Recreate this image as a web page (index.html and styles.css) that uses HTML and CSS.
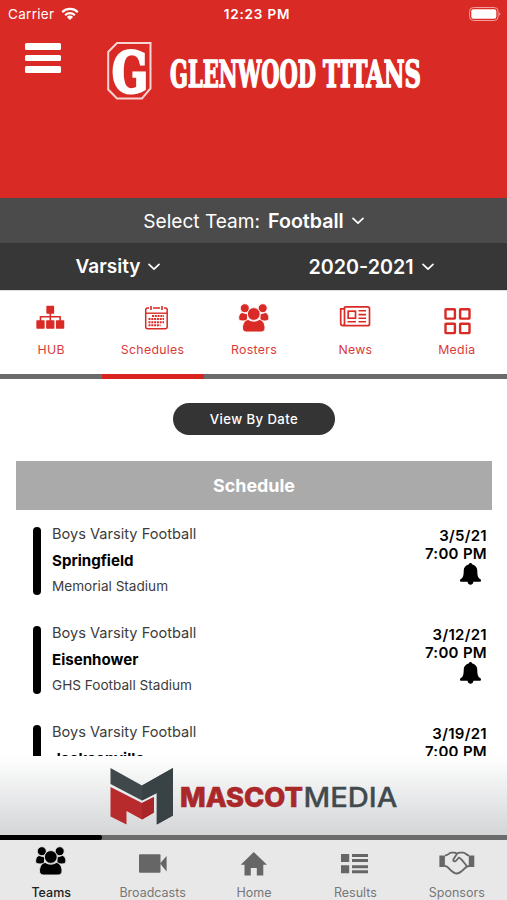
FILE: index.html
```
<!DOCTYPE html>
<html lang="en">
<head>
  <meta charset="UTF-8">
  <meta name="viewport" content="width=device-width, initial-scale=1.0">
  <title>Glenwood Titans - Schedules</title>
  <link rel="stylesheet" href="styles.css">
</head>
<body>
  <!-- Shared icons -->
  <svg class="defs" width="0" height="0">
    <symbol id="people" viewBox="0 0 36 34">
      <circle cx="8.800" cy="6.200" r="4.500"/>
      <circle cx="26.700" cy="6.200" r="4.500"/>
      <path d="M6 10.500c-3 1-4 5-3 7.500 2 1.300 6 1.300 8.500 0v-6zM29.500 10.500c3 1 4 5 3 7.500-2 1.300-6 1.300-8.500 0v-6z"/>
      <path d="M12.200 17.500q5.600 3.500 11.200 0c3.800.6 5.600 4.500 5.600 8.500 0 2.500-1.500 4-4 4H10.500c-2.500 0-4-1.500-4-4 0-4 1.900-7.900 5.700-8.500z"/>
      <circle cx="17.800" cy="12" r="6.400"/>
    </symbol>
    <symbol id="chevron" viewBox="0 0 12 8">
      <path d="M1 1.300l5 4.900 5-4.900" fill="none" stroke="#fff" stroke-width="1.700" stroke-linecap="round" stroke-linejoin="round"/>
    </symbol>
    <symbol id="bell" viewBox="0 0 21 22">
      <path d="M10.500 0c1 0 1.400.6 1.500 1.300 3.500.7 5.300 3.400 5.300 6.700 0 5 .9 7 3.200 8.300.7.500.7 2.500-.4 2.500H.900c-1.100 0-1.100-2-.4-2.500C2.800 15 3.700 13 3.700 8c0-3.300 1.800-6 5.300-6.700C9.100.6 9.500 0 10.500 0zM7.500 18.500h6c-.3 2.300-1.500 3.300-3 3.300s-2.700-1-3-3.300z"/>
    </symbol>
  </svg>

  <header class="header">
    <div class="status-bar">
      <div class="carrier">Carrier
        <svg class="wifi" width="18" height="14" viewBox="0 0 18 14">
          <path d="M1.200 5.100a11.200 11.200 0 0 1 15.600 0M4.100 8.200a7 7 0 0 1 9.800 0" fill="none" stroke="#fff" stroke-width="2.200"/>
          <path d="M9 13L5.900 9.900a4.500 4.500 0 0 1 6.200 0z" fill="#fff"/>
        </svg>
      </div>
      <div class="clock">12:23 PM</div>
      <div class="battery-wrap">
        <svg width="32" height="15" viewBox="0 0 32 15">
          <rect x=".6" y=".5" width="28.500" height="13" rx="3.800" fill="none" stroke="#f0a09d" stroke-width="1"/>
          <rect x="2.300" y="2.200" width="25" height="9.600" rx="2" fill="#fff"/>
          <path d="M30.300 5q2.200 1.900 0 3.800z" fill="#f0a09d"/>
        </svg>
      </div>
    </div>
    <div class="brand-row">
      <button class="menu" aria-label="Menu"><span></span><span></span><span></span></button>
      <svg class="crest" width="46" height="58" viewBox="0 0 46 58">
        <path d="M10 1H43.500V46.500L35 56.500H10L1.200 47.500V10z" fill="#da2a25" stroke="#f9d5d4" stroke-width="2"/>
        <text x="5" y="49.500" textLength="36" lengthAdjust="spacingAndGlyphs" class="crest-letter">G</text>
      </svg>
      <svg class="wordmark" width="254" height="46" viewBox="0 0 254 46">
        <text x="1" y="36.500" textLength="146" lengthAdjust="spacingAndGlyphs">GLENWOOD</text>
        <text x="154" y="36.500" textLength="98" lengthAdjust="spacingAndGlyphs">TITANS</text>
      </svg>
    </div>
  </header>

  <div class="team-select">
    <span>Select Team:</span> <strong>Football</strong>
    <svg width="12" height="8"><use href="#chevron"/></svg>
  </div>
  <div class="filters">
    <div class="filter level">Varsity <svg width="12" height="8"><use href="#chevron"/></svg></div>
    <div class="filter year">2020-2021 <svg width="12" height="8"><use href="#chevron"/></svg></div>
  </div>

  <nav class="tabs">
    <a class="tab">
      <svg width="36" height="34" viewBox="0 0 36 34">
        <path d="M14 4.500h6.500v6.500H14zM4 19h7v7H4zM13.800 19h7v7h-7zM23.600 19h7v7h-7z" stroke="#da2a25" stroke-width="1.300" stroke-linejoin="round"/>
        <path d="M17.300 10v9M7.500 19v-4.200h19.600V19" fill="none" stroke="#da2a25" stroke-width="1.600"/>
      </svg>
      <span>HUB</span>
    </a>
    <a class="tab">
      <svg width="36" height="34" viewBox="0 0 36 34">
        <rect x="10.700" y="6" width="21.500" height="20.700" rx="2" fill="none" stroke="#da2a25" stroke-width="1.500"/>
        <path d="M11 11.200h21" stroke="#da2a25" stroke-width="1.400"/>
        <path d="M16 3.500v4M27 3.500v4" stroke="#fff" stroke-width="4"/>
        <path d="M16 4v4M27 4v4" stroke="#da2a25" stroke-width="1.600"/>
        <path d="M17 14h12M13.500 17.100h15.500M13.500 20.200h15.500M13.500 23.300h12" stroke="#da2a25" stroke-width="2" stroke-dasharray="2 .8"/>
      </svg>
      <span>Schedules</span>
    </a>
    <a class="tab">
      <svg class="people light" width="36" height="34"><use href="#people"/></svg>
      <span>Rosters</span>
    </a>
    <a class="tab">
      <svg width="36" height="34" viewBox="0 0 36 34" fill="none" stroke="#da2a25" stroke-width="1.700">
        <path d="M7.500 4.800h23q2 0 2 2v14.900q0 2-2 2H6q-2.300 0-2.300-2V6.900H7.500M7.500 4.800v17q0 1.900-2 1.900"/>
        <rect x="11.200" y="9.200" width="7.300" height="7"/>
        <path d="M21.500 8.800h7.500M21.500 12.600h7.500M21.500 16.200h7.500M10.500 19.800h8.500M21.500 19.800h7.500" stroke-width="1.600"/>
      </svg>
      <span>News</span>
    </a>
    <a class="tab">
      <svg width="36" height="34" viewBox="0 0 36 34" fill="none" stroke="#da2a25" stroke-width="2.400">
        <rect x="6.500" y="7.200" width="9.400" height="9.400" rx=".5"/>
        <rect x="21.100" y="7.200" width="9.400" height="9.400" rx=".5"/>
        <rect x="6.500" y="21.700" width="9.400" height="9.400" rx=".5"/>
        <rect x="21.100" y="21.700" width="9.400" height="9.400" rx=".5"/>
      </svg>
      <span>Media</span>
    </a>
  </nav>
  <div class="track"><div class="track-active second"></div></div>

  <main class="content">
    <button class="view-by">View By Date</button>
    <h2>Schedule</h2>

    <div class="game">
      <div class="game-bar"></div>
      <div class="game-info">
        <p class="team">Boys Varsity Football</p>
        <p class="opponent">Springfield</p>
        <p class="place">Memorial Stadium</p>
      </div>
      <div class="game-time">
        <p>3/5/21</p>
        <p>7:00 PM</p>
        <svg width="21" height="22"><use href="#bell"/></svg>
      </div>
    </div>

    <div class="game">
      <div class="game-bar"></div>
      <div class="game-info">
        <p class="team">Boys Varsity Football</p>
        <p class="opponent">Eisenhower</p>
        <p class="place">GHS Football Stadium</p>
      </div>
      <div class="game-time">
        <p>3/12/21</p>
        <p>7:00 PM</p>
        <svg width="21" height="22"><use href="#bell"/></svg>
      </div>
    </div>

    <div class="game">
      <div class="game-bar"></div>
      <div class="game-info">
        <p class="team">Boys Varsity Football</p>
        <p class="opponent">Jacksonville</p>
      </div>
      <div class="game-time">
        <p>3/19/21</p>
        <p>7:00 PM</p>
      </div>
    </div>
  </main>

  <!-- Sponsor banner -->
  <div class="sponsor">
    <svg width="290" height="60" viewBox="109 767 290 60">
      <path d="M110.500 768L142 785.500l31-17.500v47.500l-16.200 9V793l-14.800 7.500-31.500-16.500z" fill="#41484b"/>
      <path d="M142 785.500l31-17.500v47.500l-16.200 9V793l-14.800 7.500z" fill="#394244"/>
      <path d="M110.500 787L142 803l12-6v15.500l-12 7-15.500-8.500v13.500l-16-8z" fill="#b72b2d"/>
      <path d="M142 803l12-6v15.500l-12 7z" fill="#a92527"/>
      <text x="180" y="806.500" textLength="123" lengthAdjust="spacingAndGlyphs" class="mascot">MASCOT</text>
      <text x="303.500" y="806.500" textLength="94" lengthAdjust="spacingAndGlyphs" class="media">MEDIA</text>
    </svg>
  </div>
  <div class="track"><div class="track-active first"></div></div>

  <nav class="bottom-nav">
    <a class="nav-item active">
      <svg class="people dark" width="36" height="34"><use href="#people"/></svg>
      <span>Teams</span>
    </a>
    <a class="nav-item">
      <svg width="36" height="34" viewBox="0 0 36 34">
        <rect x="4" y="9.300" width="21.500" height="18.500" rx="1"/>
        <path d="M25 18.500l6.600-7.500v15.500z"/>
      </svg>
      <span>Broadcasts</span>
    </a>
    <a class="nav-item">
      <svg width="36" height="34" viewBox="0 0 36 34">
        <path d="M17.800 7L31 19.800h-3.700V30.500h-6.500v-7.500h-6v7.500H8.500V19.800H4.700z"/>
      </svg>
      <span>Home</span>
    </a>
    <a class="nav-item">
      <svg width="36" height="34" viewBox="0 0 36 34">
        <path d="M4 9h8.200v8H4zM4 20.200h8.200v8H4zM15 9h16v3h-16zM15 14h16v3h-16zM15 20.200h16v3h-16zM15 25.200h16v3h-16z"/>
      </svg>
      <span>Results</span>
    </a>
    <a class="nav-item">
      <svg width="36" height="34" viewBox="0 0 36 34">
        <path d="M.400 10.500h5.500v11.500H.400zM29.800 10.500h5.500v11.500H29.800z"/>
        <path d="M6 10.500c3.500 0 4-2.800 6.500-2.800h3.200l2.300 1 2.300-1h4c2.500 0 3 2.800 5.800 2.800M6 21c3 0 3.500 2.500 6 4.500 2.500 2 4 3 5.500 3 2 0 4.500-1.500 7-4 2-2 2.500-3.500 5.500-3.500M18 8.700l-3.500 5.500c-1 1.800 1.300 3 2.800 1.300l2.700-3c1 .3 2 1.500 3 2.700l4 4.800c.8 1.200.5 2.300-.5 3" fill="none" stroke="#666" stroke-width="1.800" stroke-linejoin="round"/>
      </svg>
      <span>Sponsors</span>
    </a>
  </nav>
</body>
</html>
```
FILE: styles.css
```
* {
  box-sizing: border-box;
}
body {
  margin: 0;
  width: 507px;
  height: 900px;
  overflow: hidden;
  display: flex;
  flex-direction: column;
  background: #fff;
  font-family: Inter, "Liberation Sans", sans-serif;
}
p, h2 {
  margin: 0;
}
button {
  border: none;
  font-family: inherit;
}
.defs {
  position: absolute;
}

/* Header */
.header {
  height: 198px;
  flex-shrink: 0;
  background: #da2a25;
  color: #fff;
}
.status-bar {
  display: grid;
  grid-template-columns: 1fr 1fr 1fr;
  height: 28px;
  align-items: center;
  padding: 0 6px 0 8px;
  font-size: 13.5px;
}
.carrier {
  display: flex;
  align-items: center;
  gap: 7px;
  letter-spacing: 0.3px;
}
.clock {
  text-align: center;
  font-weight: 600;
  padding-left: 5px;
  letter-spacing: 0.8px;
  white-space: nowrap;
}
.battery-wrap {
  display: flex;
  justify-content: flex-end;
}
.brand-row {
  display: flex;
  align-items: flex-start;
  padding: 14px 0 0 25px;
}
.menu {
  display: flex;
  flex-direction: column;
  gap: 5px;
  width: 36px;
  padding: 1px 0 0;
  background: none;
}
.menu span {
  height: 6.5px;
  border-radius: 1.5px;
  background: #fff;
}
.crest {
  margin-left: 46px;
  overflow: visible;
}
.crest-letter {
  font: bold 56px "DejaVu Serif", serif;
  fill: #fff;
  stroke: #fff;
  stroke-width: 3px;
}
.wordmark {
  margin: 8px 0 0 16px;
  font: bold 37.5px "DejaVu Serif", serif;
  fill: #fff;
  stroke: #fff;
  stroke-width: 1.7px;
  overflow: visible;
}

/* Team filters */
.team-select {
  height: 45px;
  flex-shrink: 0;
  display: flex;
  align-items: center;
  justify-content: center;
  gap: 8px;
  background: #4b4b4b;
  color: #fff;
  font-size: 19.1px;
}
.team-select strong {
  font-size: 19.6px;
}
.team-select strong, .filter {
  font-weight: 600;
}
.filters {
  height: 47px;
  flex-shrink: 0;
  display: grid;
  grid-template-columns: 236px 1fr;
  background: #373737;
  color: #fff;
}
.filter {
  display: flex;
  align-items: center;
  justify-content: center;
  gap: 8px;
  font-size: 19px;
}
.year {
  font-size: 19.7px;
  padding-right: 1px;
}

/* Tabs */
.tabs, .bottom-nav {
  display: grid;
  grid-template-columns: repeat(5, 1fr);
  flex-shrink: 0;
}
.tabs {
  height: 84px;
  padding-top: 11px;
  border-top: 1px solid #ddd;
}
.tab, .nav-item {
  display: flex;
  flex-direction: column;
  align-items: center;
  padding-left: 1px;
}
.tab {
  fill: #da2a25;
  color: #da3a36;
  font-size: 12.3px;
  letter-spacing: 0.3px;
}
.tab span, .nav-item span {
  margin-top: 6px;
  line-height: 16px;
}
.people {
  stroke-width: 0.9px;
}
.light {
  stroke: #fff;
}
.dark {
  stroke: #e8e8e8;
}
.track {
  height: 5px;
  flex-shrink: 0;
  background: #6b6b6b;
}
.track-active {
  width: 102px;
  height: 5px;
}
.second {
  margin-left: 102px;
  background: #d8231f;
}
.first {
  background: #000;
  border-radius: 0 2px 2px 0;
}

/* Schedule */
.content {
  height: 377px;
  flex-shrink: 0;
  overflow: hidden;
  padding: 24px 15px 0 16px;
  display: flex;
  flex-direction: column;
}
.view-by {
  align-self: center;
  width: 162px;
  height: 32px;
  flex-shrink: 0;
  border-radius: 16px;
  background: #343434;
  color: #fff;
  font-size: 13.2px;
  font-weight: 500;
  letter-spacing: 0.4px;
}
h2 {
  width: 476px;
  height: 49px;
  flex-shrink: 0;
  margin: 26px 0 17px;
  background: #aaa;
  color: #fff;
  font-size: 17.9px;
  line-height: 49px;
  font-weight: 700;
  text-align: center;
}
.game {
  display: flex;
  height: 99px;
  flex-shrink: 0;
  padding: 0 5px 0 16.5px;
}
.game-bar {
  width: 8px;
  height: 68px;
  border-radius: 4px;
  background: #000;
}
.game-info {
  flex: 1;
  margin: -6px 0 0 11.5px;
  line-height: 26px;
}
.team {
  font-size: 14.6px;
  color: #3c3c3c;
}
.opponent {
  padding-top: 1px;
  font-size: 15.1px;
  font-weight: 700;
}
.place {
  font-size: 13.6px;
  line-height: 24px;
  color: #3c3c3c;
}
.game-time {
  text-align: right;
  font-size: 15px;
  line-height: 18px;
  font-weight: 600;
  letter-spacing: 0.3px;
}
.game-time svg {
  margin-right: 6px;
}

/* Footer */
.sponsor {
  height: 79px;
  flex-shrink: 0;
  padding: 11px 0 0 109px;
  background: linear-gradient(#fff, #d3d5d7);
}
.mascot {
  font: 800 27px Inter, sans-serif;
  fill: #ab282a;
  stroke: #ab282a;
  stroke-width: 0.6px;
}
.media {
  font: 500 27px Inter, sans-serif;
  fill: #414a4d;
  stroke: #414a4d;
  stroke-width: 0.3px;
}
.bottom-nav {
  height: 60px;
  padding-top: 5px;
  background: #e8e8e8;
  fill: #666;
  color: #777;
  font-size: 12.5px;
}
.active {
  color: #222;
  fill: #000;
  font-weight: 500;
}
```
